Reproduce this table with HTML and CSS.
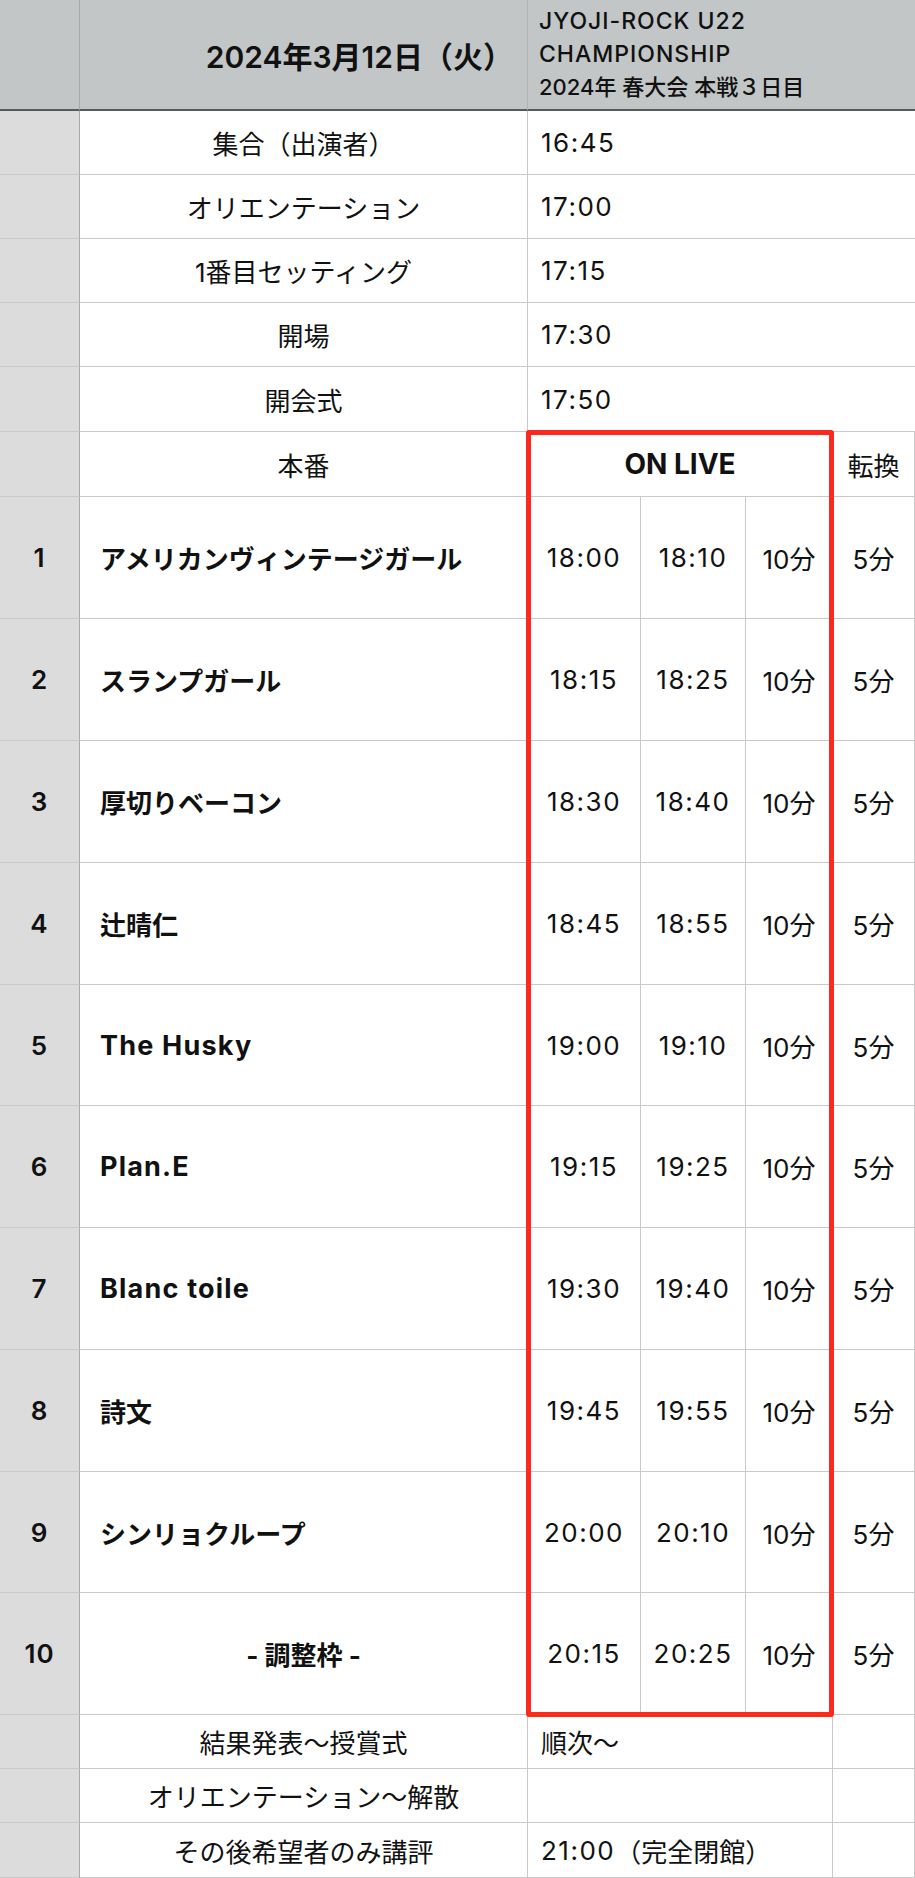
FILE: index.html
```html
<!DOCTYPE html>
<html lang="ja">

<head>
  <meta charset="UTF-8">
  <meta name="viewport" content="width=device-width, initial-scale=1.0">
  <title>JYOJI-ROCK U22 タイムテーブル</title>
  <link rel="stylesheet" href="styles.css">
</head>

<body>
  <div class="sheet">
    <!-- header -->
    <div class="cell head idx"></div>
    <div class="cell head date">2024年3月12日（火）</div>
    <div class="cell head title span4">
      <span class="en">JYOJI-ROCK U22</span>
      <span class="en">CHAMPIONSHIP</span>
      <span>2024年 春大会 本戦３日目</span>
    </div>

    <!-- before the show -->
    <div class="cell idx"></div>
    <div class="cell label">集合（出演者）</div>
    <div class="cell note t span4">16:45</div>

    <div class="cell idx"></div>
    <div class="cell label">オリエンテーション</div>
    <div class="cell note t span4">17:00</div>

    <div class="cell idx"></div>
    <div class="cell label">1番目セッティング</div>
    <div class="cell note t span4">17:15</div>

    <div class="cell idx"></div>
    <div class="cell label">開場</div>
    <div class="cell note t span4">17:30</div>

    <div class="cell idx"></div>
    <div class="cell label">開会式</div>
    <div class="cell note t span4">17:50</div>

    <div class="cell idx"></div>
    <div class="cell label">本番</div>
    <div class="cell onlive span3">ON LIVE</div>
    <div class="cell mid">転換</div>

    <!-- acts -->
    <div class="cell idx no">1</div>
    <div class="cell act">アメリカンヴィンテージガール</div>
    <div class="cell mid t">18:00</div>
    <div class="cell mid t">18:10</div>
    <div class="cell mid">10分</div>
    <div class="cell mid">5分</div>

    <div class="cell idx no">2</div>
    <div class="cell act">スランプガール</div>
    <div class="cell mid t">18:15</div>
    <div class="cell mid t">18:25</div>
    <div class="cell mid">10分</div>
    <div class="cell mid">5分</div>

    <div class="cell idx no">3</div>
    <div class="cell act">厚切りベーコン</div>
    <div class="cell mid t">18:30</div>
    <div class="cell mid t">18:40</div>
    <div class="cell mid">10分</div>
    <div class="cell mid">5分</div>

    <div class="cell idx no">4</div>
    <div class="cell act">辻晴仁</div>
    <div class="cell mid t">18:45</div>
    <div class="cell mid t">18:55</div>
    <div class="cell mid">10分</div>
    <div class="cell mid">5分</div>

    <div class="cell idx no">5</div>
    <div class="cell act en">The Husky</div>
    <div class="cell mid t">19:00</div>
    <div class="cell mid t">19:10</div>
    <div class="cell mid">10分</div>
    <div class="cell mid">5分</div>

    <div class="cell idx no">6</div>
    <div class="cell act en">Plan.E</div>
    <div class="cell mid t">19:15</div>
    <div class="cell mid t">19:25</div>
    <div class="cell mid">10分</div>
    <div class="cell mid">5分</div>

    <div class="cell idx no">7</div>
    <div class="cell act en">Blanc toile</div>
    <div class="cell mid t">19:30</div>
    <div class="cell mid t">19:40</div>
    <div class="cell mid">10分</div>
    <div class="cell mid">5分</div>

    <div class="cell idx no">8</div>
    <div class="cell act">詩文</div>
    <div class="cell mid t">19:45</div>
    <div class="cell mid t">19:55</div>
    <div class="cell mid">10分</div>
    <div class="cell mid">5分</div>

    <div class="cell idx no">9</div>
    <div class="cell act">シンリョクループ</div>
    <div class="cell mid t">20:00</div>
    <div class="cell mid t">20:10</div>
    <div class="cell mid">10分</div>
    <div class="cell mid">5分</div>

    <div class="cell idx no">10</div>
    <div class="cell act reserve">- 調整枠 -</div>
    <div class="cell mid t">20:15</div>
    <div class="cell mid t">20:25</div>
    <div class="cell mid">10分</div>
    <div class="cell mid">5分</div>

    <!-- after the show -->
    <div class="cell idx"></div>
    <div class="cell label">結果発表〜授賞式</div>
    <div class="cell note span3">順次〜</div>
    <div class="cell"></div>

    <div class="cell idx"></div>
    <div class="cell label">オリエンテーション〜解散</div>
    <div class="cell note span3"></div>
    <div class="cell"></div>

    <div class="cell idx"></div>
    <div class="cell label">その後希望者のみ講評</div>
    <div class="cell note span3"><span class="t">21:00</span>（完全閉館）</div>
    <div class="cell"></div>

    <!-- red frame laid over the live block -->
    <div class="live-frame"></div>
  </div>
</body>

</html>
```

FILE: styles.css
```css
body {
  margin: 0;
  padding: 0;
  background-color: #ffffff;
  font-family: Inter, "Noto Sans CJK JP", sans-serif;
  color: #111111;
}

.sheet {
  position: relative;
  display: grid;
  width: 915px;
  grid-template-columns: 80px 448px 113px 105px 87px 82px;
  grid-template-rows:
    111px
    64px 64px 64px 64px 65px
    65px
    122px 122px 122px 122px 121px 122px 122px 122px 121px 122px
    54px 54px 55px;
}

.cell {
  display: flex;
  align-items: center;
  border-right: 1px solid #c9c9c9;
  border-bottom: 1px solid #c9c9c9;
  font-size: 26px;
  white-space: nowrap;
}

.span4 {
  grid-column: span 4;
}

.span3 {
  grid-column: span 3;
}

/* latin text and figures run a bit wider in the original sheet */
.t {
  letter-spacing: 1.5px;
}

.en {
  letter-spacing: 1.2px;
}

.head {
  background-color: #c2c6c6;
  border-bottom: 2px solid #575a5a;
  border-right-color: #b0b4b4;
}

.idx {
  justify-content: center;
  background-color: #dcdcdc;
  border-right-color: #a9a9a9;
}

.head.idx {
  background-color: #c2c6c6;
}

.date {
  justify-content: flex-end;
  padding-right: 14px;
  font-size: 30px;
  font-weight: 600;
}

.title {
  flex-direction: column;
  align-items: flex-start;
  justify-content: center;
  padding-left: 11px;
  font-size: 22px;
  line-height: 33px;
  font-weight: 500;
  border-right: none;
}

.title .en {
  letter-spacing: 1px;
  font-size: 23px;
}

.label {
  justify-content: center;
}

.note {
  padding-left: 13px;
}

.span4.note {
  border-right: none;
}

.onlive {
  justify-content: center;
  font-size: 28px;
  font-weight: 700;
}

.mid {
  justify-content: center;
}

.act {
  padding-left: 20px;
  font-weight: 700;
}

.act.en {
  font-size: 27px;
}

.act.reserve {
  justify-content: center;
  padding-left: 0;
}

.no {
  font-weight: 600;
  letter-spacing: 1px;
}

.live-frame {
  position: absolute;
  grid-row: 7 / 18;
  grid-column: 3 / 6;
  top: -2px;
  bottom: -2px;
  left: -2px;
  right: -1px;
  border: 5px solid #fb2a1c;
  border-radius: 3px;
  pointer-events: none;
}
```
